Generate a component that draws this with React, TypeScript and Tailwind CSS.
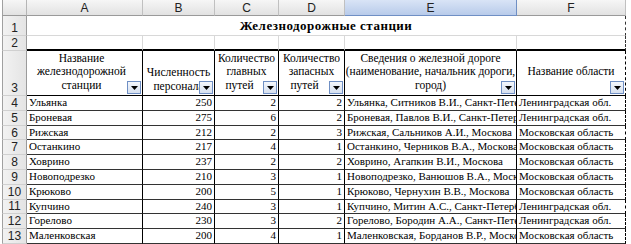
import React from "react";

const rows = [
  ["4", "Ульянка", "250", "2", "2", "Ульянка, Ситников В.И., Санкт-Петербург", "Ленинградская обл."],
  ["5", "Броневая", "275", "6", "2", "Броневая, Павлов В.И., Санкт-Петербург", "Ленинградская обл."],
  ["6", "Рижская", "212", "2", "3", "Рижская, Сальников А.И., Москова", "Московская область"],
  ["7", "Останкино", "217", "4", "1", "Останкино, Черников В.А., Москова", "Московская область"],
  ["8", "Ховрино", "237", "2", "2", "Ховрино, Агапкин В.И., Москова", "Московская область"],
  ["9", "Новоподрезко", "210", "3", "1", "Новоподрезко, Ванюшов В.А., Москова", "Московская область"],
  ["10", "Крюково", "200", "5", "1", "Крюково, Чернухин В.В., Москова", "Московская область"],
  ["11", "Купчино", "240", "3", "1", "Купчино, Митин А.С., Санкт-Петербург", "Ленинградская обл."],
  ["12", "Горелово", "230", "3", "2", "Горелово, Бородин А.А., Санкт-Петербург", "Ленинградская обл."],
  ["13", "Маленковская", "200", "4", "1", "Маленковская, Борданов В.Р., Москова", "Московская область"],
];

function FilterBtn() {
  return (
    <div className="absolute right-[1px] bottom-[1px] w-[14px] h-[13px] border border-[#6f8fc4] bg-gradient-to-b from-[#f4f7fc] to-[#d6e0ef] flex items-center justify-center">
      <svg width="7" height="4" viewBox="0 0 7 4">
        <path d="M0 0H7L3.5 4Z" fill="#000" />
      </svg>
    </div>
  );
}

function RowHead({ n, h, items = "items-end" }: { n: string; h: string; items?: string }) {
  return (
    <div
      className={`w-[25px] ${h} shrink-0 border-l border-l-[#a0a0a0] border-r border-r-[#9a9a9a] border-b border-b-[#d0d0d0] bg-gradient-to-r from-[#f2f2f2] to-[#e4e4e4] flex ${items} justify-center [font-family:'Liberation_Sans',Arial,sans-serif] text-[12px] leading-[14px] text-[#222]`}
    >
      {n}
    </div>
  );
}

export default function App() {
  return (
    <div className="w-[631px] h-[244px] overflow-hidden bg-white text-black [font-family:'Liberation_Serif','Times_New_Roman',serif]">
      {/* column headers */}
      <div className="flex h-[16px]">
        <div className="w-[2px] shrink-0" />
        <div className="w-[25px] shrink-0 border-l border-l-[#a0a0a0] border-r border-r-[#b5b5b5] border-b border-b-[#9a9a9a] bg-gradient-to-b from-[#f6f6f6] to-[#e2e2e2]" />
        {[
          ["A", "w-[116px]", false],
          ["B", "w-[72px]", false],
          ["C", "w-[64px]", false],
          ["D", "w-[66px]", false],
          ["E", "w-[172px]", true],
          ["F", "w-[109px]", false],
        ].map(([l, w, sel]) => (
          <div
            key={l as string}
            className={`${w} shrink-0 border-r border-b flex items-center justify-center [font-family:'Liberation_Sans',Arial,sans-serif] text-[12px] leading-[14px] text-[#222] ${
              sel
                ? "bg-gradient-to-b from-[#d9e4f6] to-[#b8cbea] border-r-[#6f8fc4] border-b-[#6f8fc4]"
                : "bg-gradient-to-b from-[#f6f6f6] to-[#e2e2e2] border-r-[#c0c0c0] border-b-[#9a9a9a]"
            }`}
          >
            {l}
          </div>
        ))}
      </div>

      {/* row 1 */}
      <div className="flex h-[20px]">
        <div className="w-[2px] shrink-0" />
        <RowHead n="1" h="h-[20px]" />
        <div className="w-[599px] shrink-0 border-b border-b-[#d8d8d8] border-r border-r-[#333] [border-right-style:dashed] flex items-end justify-center">
          <span className="font-bold text-[13px] leading-[18px] tracking-[0.5px]">Железнодорожные станции</span>
        </div>
      </div>

      {/* row 2 */}
      <div className="flex h-[15px]">
        <div className="w-[2px] shrink-0" />
        <RowHead n="2" h="h-[15px]" />
        <div className="w-[116px] shrink-0 border-r border-r-[#d8d8d8] border-b-2 border-b-black" />
        <div className="w-[72px] shrink-0 border-r border-r-[#d8d8d8] border-b-2 border-b-black" />
        <div className="w-[64px] shrink-0 border-r border-r-[#d8d8d8] border-b-2 border-b-black" />
        <div className="w-[66px] shrink-0 border-r border-r-[#d8d8d8] border-b-2 border-b-black" />
        <div className="w-[172px] shrink-0 border-r border-r-[#d8d8d8] border-b-2 border-b-black" />
        <div className="w-[109px] shrink-0 border-r border-r-[#333] [border-right-style:dashed] border-b-2 border-b-black" />
      </div>

      {/* row 3 header */}
      <div className="flex h-[45px] text-[11.5px] leading-[13.5px]">
        <div className="w-[2px] shrink-0" />
        <RowHead n="3" h="h-[45px]" />
        <div className="relative w-[116px] shrink-0 border-r border-r-black border-b border-b-black flex flex-col items-center justify-center pb-[2px] pr-[6px] text-center">
          <span>Название</span>
          <span>железнодорожной</span>
          <span>станции</span>
          <FilterBtn />
        </div>
        <div className="relative w-[72px] shrink-0 border-r border-r-black border-b border-b-black flex flex-col items-center justify-end pb-[2px] text-center overflow-hidden whitespace-nowrap">
          <span>Численность</span>
          <span>персонала</span>
          <FilterBtn />
        </div>
        <div className="relative w-[64px] shrink-0 border-r border-r-black border-b border-b-black flex flex-col items-center justify-center pb-[2px] text-center">
          <span>Количество</span>
          <span>главных</span>
          <span className="pr-[14px]">путей</span>
          <FilterBtn />
        </div>
        <div className="relative w-[66px] shrink-0 border-r border-r-black border-b border-b-black flex flex-col items-center justify-center pb-[2px] text-center">
          <span>Количество</span>
          <span>запасных</span>
          <span className="pr-[14px]">путей</span>
          <FilterBtn />
        </div>
        <div className="relative w-[172px] shrink-0 border-r border-r-black border-b border-b-black flex flex-col items-center justify-center pb-[2px] text-center whitespace-nowrap">
          <span>Сведения о железной дороге</span>
          <span>(наименование, начальник дороги,</span>
          <span>город)</span>
          <FilterBtn />
        </div>
        <div className="relative w-[109px] shrink-0 border-r border-r-black [border-right-style:dashed] border-b border-b-black flex flex-col items-center justify-center pb-[2px] text-center">
          <span>Название области</span>
          <FilterBtn />
        </div>
      </div>

      {/* data rows */}
      {rows.map((r) => (
        <div key={r[0]} className="flex h-[14.8px] text-[11px] leading-[13.5px]">
          <div className="w-[2px] shrink-0" />
          <RowHead n={r[0]} h="h-[14.8px]" items="items-center" />
          <div className="w-[116px] shrink-0 border-r border-r-black border-b border-b-[#333] pl-[2px] whitespace-nowrap overflow-hidden">{r[1]}</div>
          <div className="w-[72px] shrink-0 border-r border-r-black border-b border-b-[#333] pr-[2px] text-right">{r[2]}</div>
          <div className="w-[64px] shrink-0 border-r border-r-black border-b border-b-[#333] pr-[2px] text-right">{r[3]}</div>
          <div className="w-[66px] shrink-0 border-r border-r-black border-b border-b-[#333] pr-[2px] text-right">{r[4]}</div>
          <div className="w-[172px] shrink-0 border-r border-r-black border-b border-b-[#333] pl-[2px] whitespace-nowrap overflow-hidden">{r[5]}</div>
          <div className="w-[109px] shrink-0 border-r border-r-black [border-right-style:dashed] border-b border-b-[#333] pl-[2px] whitespace-nowrap overflow-hidden">{r[6]}</div>
        </div>
      ))}
    </div>
  );
}
